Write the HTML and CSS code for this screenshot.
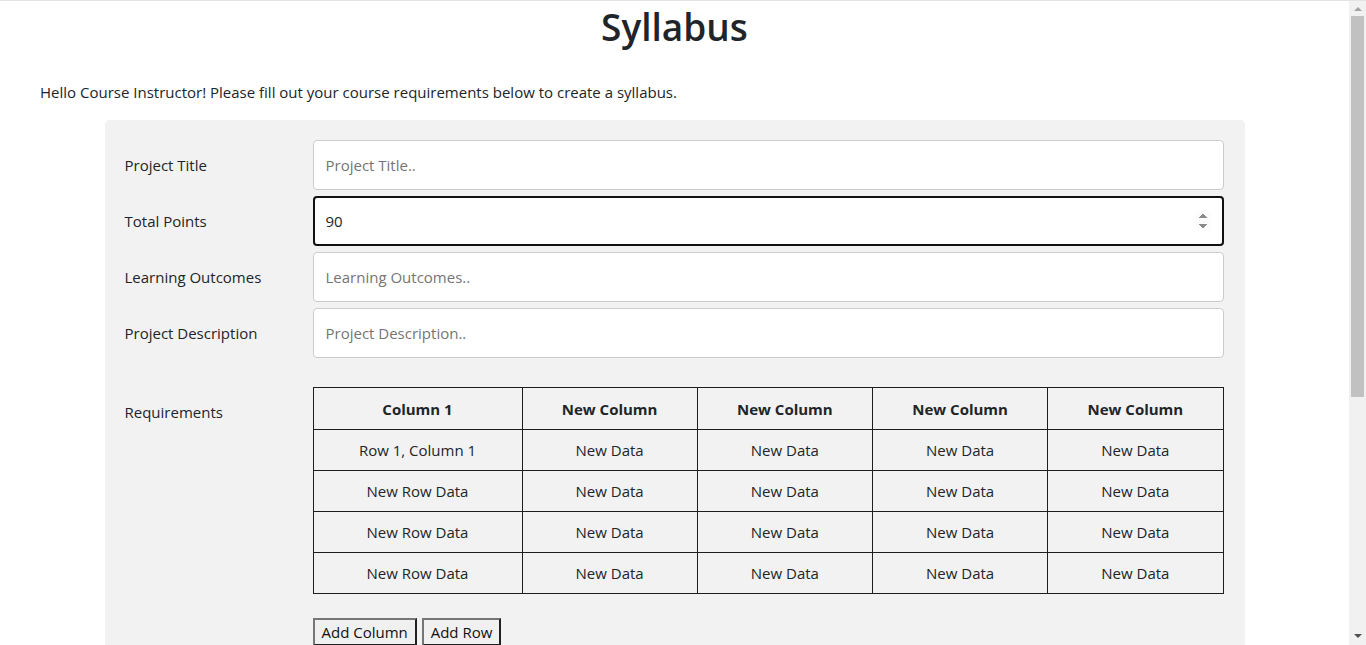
FILE: index.html
```html
<!DOCTYPE html>
<html>
<head>
    <meta name="viewport" content="width=device-width, initial-scale=1.0">
    <title>Syllabus</title>
    <link rel="stylesheet" href="styles.css">
</head>
<body>

<h1 class="page-title">Syllabus</h1>
<p class="intro">Hello Course Instructor! Please fill out your course requirements below to create a syllabus.</p>

<div class="container">
    <form>
        <div class="row">
            <div class="col-label"><label for="ptitle">Project Title</label></div>
            <div class="col-field"><input type="text" id="ptitle" placeholder="Project Title.."></div>
        </div>
        <div class="row">
            <div class="col-label"><label for="points">Total Points</label></div>
            <div class="col-field"><input type="number" id="points" class="is-active" value="90"></div>
        </div>
        <div class="row">
            <div class="col-label"><label for="outcomes">Learning Outcomes</label></div>
            <div class="col-field"><input type="text" id="outcomes" placeholder="Learning Outcomes.."></div>
        </div>
        <div class="row">
            <div class="col-label"><label for="pdesc">Project Description</label></div>
            <div class="col-field"><input type="text" id="pdesc" placeholder="Project Description.."></div>
        </div>

        <div class="row row-requirements">
            <div class="col-label"><label>Requirements</label></div>
            <div class="col-field">
                <table class="req-table">
                    <colgroup>
                        <col class="col-first">
                        <col><col><col><col>
                    </colgroup>
                    <tr>
                        <th>Column 1</th>
                        <th>New Column</th>
                        <th>New Column</th>
                        <th>New Column</th>
                        <th>New Column</th>
                    </tr>
                    <tr>
                        <td>Row 1, Column 1</td>
                        <td>New Data</td>
                        <td>New Data</td>
                        <td>New Data</td>
                        <td>New Data</td>
                    </tr>
                    <tr>
                        <td>New Row Data</td>
                        <td>New Data</td>
                        <td>New Data</td>
                        <td>New Data</td>
                        <td>New Data</td>
                    </tr>
                    <tr>
                        <td>New Row Data</td>
                        <td>New Data</td>
                        <td>New Data</td>
                        <td>New Data</td>
                        <td>New Data</td>
                    </tr>
                    <tr>
                        <td>New Row Data</td>
                        <td>New Data</td>
                        <td>New Data</td>
                        <td>New Data</td>
                        <td>New Data</td>
                    </tr>
                </table>
                <div class="table-actions">
                    <button type="button">Add Column</button>
                    <button type="button">Add Row</button>
                </div>
            </div>
        </div>
    </form>
</div>

<!-- vertical scroll rail on the right edge -->
<div class="scroll-rail">
    <span class="scroll-arrow scroll-up"></span>
    <span class="scroll-thumb"></span>
    <span class="scroll-arrow scroll-down"></span>
</div>

</body>
</html>
```

FILE: styles.css
```css
* {box-sizing: border-box;}

body {
    margin: 0;
    padding-right: 17px;
    border-top: 1px solid #e3e3e3;
    font-family: "Open Sans", "Noto Sans", Arial, sans-serif;
    font-size: 15px;
    color: #212529;
    background-color: #fff;
}

.page-title {
    margin: 0;
    padding-top: 2px;
    text-align: center;
    font-size: 37px;
    font-weight: 600;
    line-height: 48px;
}

.intro {
    margin: 29px 0 0 40px;
    line-height: 24px;
}

.container {
    max-width: 1140px;
    margin: 16px auto 40px;
    padding: 20px 21px 20px 20px;
    background-color: #f2f2f2;
    border-radius: 5px;
}

.row {
    display: flex;
    margin-bottom: 6px;
}

.row-requirements {
    margin-top: 29px;
}

.col-label {
    width: 188px;
    flex-shrink: 0;
}

.col-label label {
    display: inline-block;
    padding-top: 13px;
    line-height: 24px;
}

.col-field {
    flex: 1;
}

/* text inputs */
input[type=text],
input[type=number] {
    width: 100%;
    height: 50px;
    padding: 12px;
    border: 1px solid #ccc;
    border-radius: 4px;
    font-family: inherit;
    font-size: 15px;
    color: #212529;
    background-color: #fff;
}

input::placeholder {
    color: #757575;
}

input.is-active {
    border: 2px solid #111;
    padding: 11px;
}

input[type=number]::-webkit-inner-spin-button {
    opacity: 1;
}

/* requirements table */
.req-table {
    width: 100%;
    table-layout: fixed;
    border-collapse: collapse;
    background-color: #f2f2f2;
}

.req-table .col-first {
    width: 209px;
}

.req-table th,
.req-table td {
    padding: 8px;
    border: 1px solid #1e1e1e;
    text-align: center;
    line-height: 24px;
    font-size: 15px;
}

.req-table th {
    font-weight: 700;
    padding-top: 9px;
}

.table-actions {
    margin-top: 24px;
}

.table-actions button {
    margin-right: 1px;
    padding: 1px 7px;
    font-family: inherit;
    font-size: 15px;
    line-height: 22px;
    color: #111;
    background-color: #f0f0f0;
    border: 2px outset #767676;
}

/* scroll rail */
.scroll-rail {
    position: fixed;
    top: 1px;
    right: 0;
    bottom: 0;
    width: 17px;
    display: flex;
    flex-direction: column;
    align-items: center;
    background-color: #f1f1f1;
}

.scroll-arrow {
    width: 0;
    height: 0;
    border-left: 4px solid transparent;
    border-right: 4px solid transparent;
}

.scroll-up {
    margin: 6px 0 5px;
    border-bottom: 4px solid #a3a3a3;
}

.scroll-down {
    margin: auto 0 7px;
    border-top: 4px solid #505050;
}

.scroll-thumb {
    width: 13px;
    height: 381px;
    background-color: #c1c1c1;
}
```
